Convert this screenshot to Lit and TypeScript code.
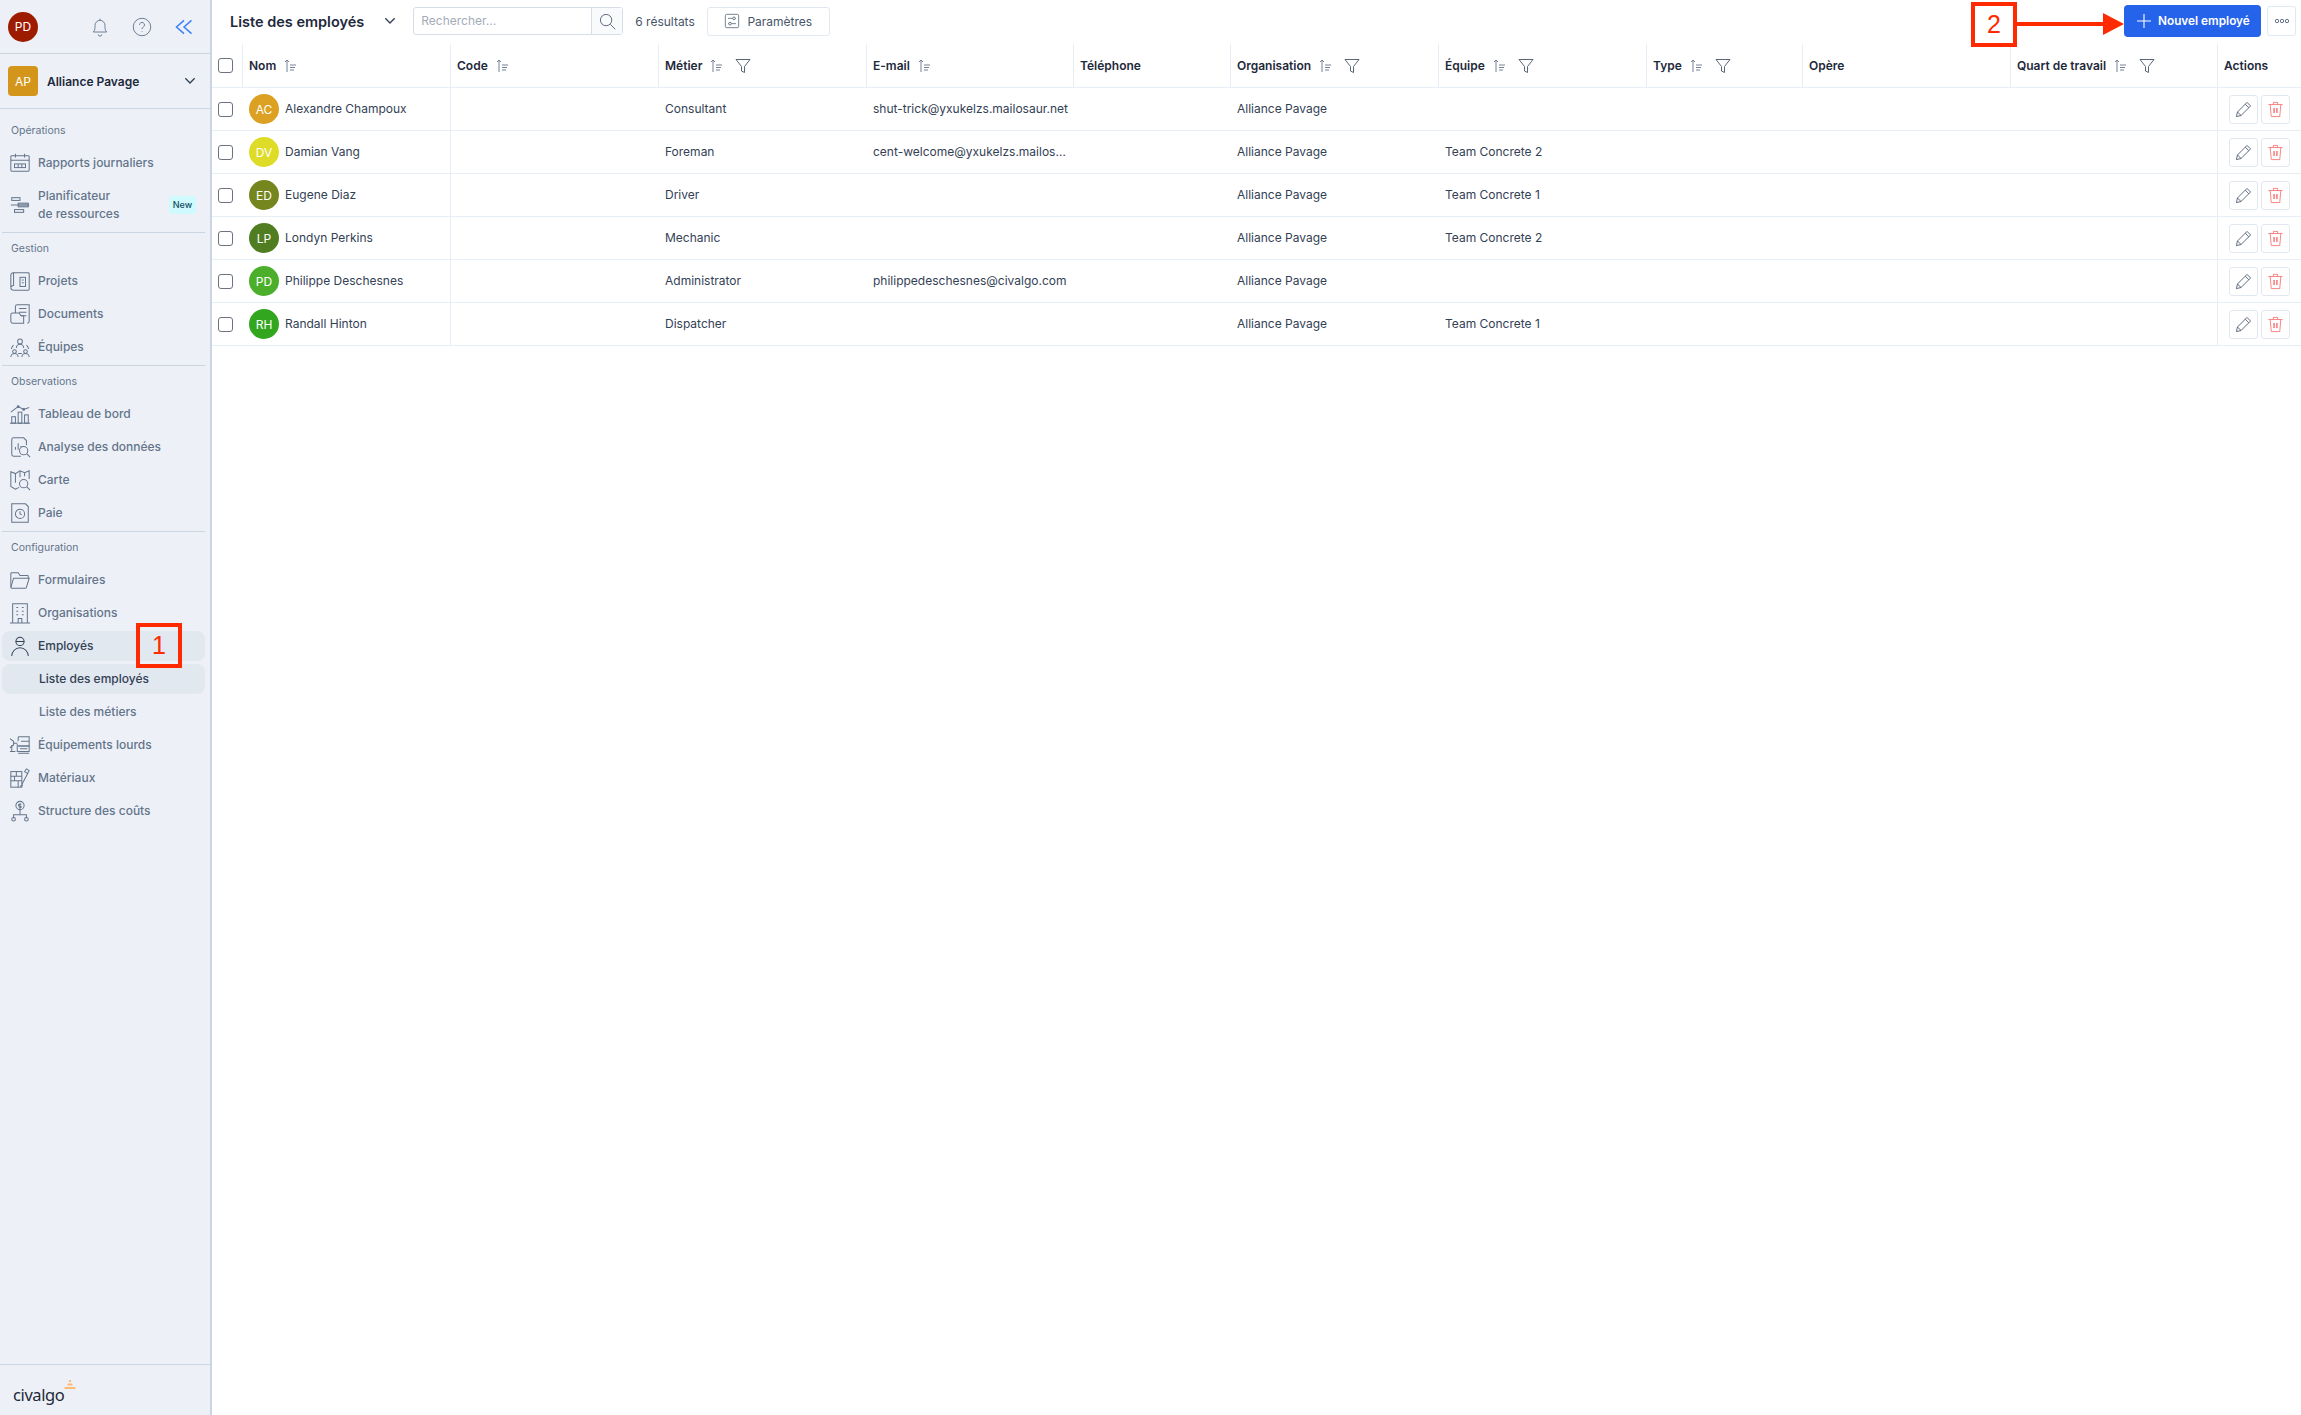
import { LitElement, html, css, svg } from "lit";
import { customElement } from "lit/decorators.js";

const icons: Record<string, unknown> = {
  rapports: svg`<rect x="2" y="4" width="20" height="17" rx="1"/><path d="M2 9h20M7 2v4M17 2v4"/><rect x="6" y="13" width="12" height="4"/><path d="M10 13v4M14 13v4"/>`,
  planif: svg`<path d="M2 12h20"/><rect x="3" y="4" width="9" height="3"/><rect x="10" y="10" width="11" height="4" fill="currentColor" fill-opacity=".4"/><rect x="6" y="17" width="10" height="3"/>`,
  projets: svg`<path d="M5 3h16a1 1 0 0 1 1 1v17a1 1 0 0 1-1 1H5"/><path d="M5 3a3 3 0 0 0-3 2v14a3 3 0 0 1 3-2z"/><path d="M2 19a3 3 0 0 0 3 3"/><rect x="12" y="8" width="6" height="10"/><path d="M14 11h2M14 14h2"/>`,
  documents: svg`<path d="M7 11V4a2 2 0 0 1 2-2h13v18a2 2 0 0 1-2 2"/><path d="M11 6h8M11 10h8M13 14h6"/><path d="M2 13a2 2 0 0 1 2-2h7l2 3h3v8H4a2 2 0 0 1-2-2z"/>`,
  equipes: svg`<circle cx="12" cy="6" r="2.600"/><path d="M8 13a4 4 0 0 1 8 0"/><circle cx="6" cy="17" r="2"/><path d="M2 23a4 4 0 0 1 8 0"/><circle cx="18" cy="17" r="2"/><path d="M14 23a4 4 0 0 1 8 0M5 10a9 9 0 0 0-2.500 4M19 10a9 9 0 0 1 2.500 4M10 19h4"/>`,
  tableau: svg`<path d="M1 22h22"/><rect x="3" y="15" width="4" height="7"/><rect x="10" y="10" width="4" height="12"/><rect x="17" y="13" width="4" height="9"/><path d="M2 10l8-6 6 3 6-2"/><circle cx="10" cy="4" r="1"/><circle cx="16" cy="7" r="1"/>`,
  analyse: svg`<path d="M13 22H5a2 2 0 0 1-2-2V4a2 2 0 0 1 2-2h11l3 3v5"/><path d="M7 15v-3M10 15V8M13 12v-1"/><circle cx="16" cy="16" r="4.500"/><path d="M19.500 19.500 23 23"/>`,
  carte: svg`<path d="M11 20l-4 2-5-3V3l5 2 5-3 5 2 5-2v9"/><path d="M7 5v10M12 2v7M17 4v4"/><circle cx="16" cy="16" r="4.500"/><path d="M19.500 19.500 23 23"/>`,
  paie: svg`<path d="M3 2h15l3 3v17H3z"/><circle cx="12" cy="13" r="5"/><path d="M12 10v3l2 1"/>`,
  formulaires: svg`<path d="M2 20V5a1 1 0 0 1 1-1h7l2 3h8a1 1 0 0 1 1 1v2"/><path d="M2 20l3-10h17l-3 10a1 1 0 0 1-1 1H3a1 1 0 0 1-1-1z"/>`,
  organisations: svg`<path d="M1 23h22M4 23V2h16v21"/><path d="M8 6h2M14 6h2M8 10h2M14 10h2M8 14h2M14 14h2"/><path d="M10 23v-5h4v5"/>`,
  employes: svg`<circle cx="12" cy="7" r="4.500"/><path d="M7.500 7h9M3 23a9 9 0 0 1 18 0"/>`,
  equipements: svg`<path d="M10 8V4a1 1 0 0 1 1-1h11v10H10"/><path d="M10 13h12v6H9v-8M13 8h9M12 16h8"/><path d="M1 5l4 3v4l-4 3M5 10h4M1 19h6M3 12v7"/><path d="M10 21h12"/>`,
  materiaux: svg`<rect x="2" y="5" width="12" height="17"/><path d="M2 10h12M2 15h12M8 5v5M6 10v5M10 15v7"/><path d="M14 19l7-13M19 2l3 2-2 3-3-2zM12 21l3-1"/>`,
  structure: svg`<circle cx="12" cy="6" r="4.500"/><path d="M12 3.500v5M13.500 4.700h-2.200a1 1 0 0 0 0 2h1.400a1 1 0 0 1 0 1.900h-2.200"/><path d="M12 11v5M5 20v-4h14v4"/><circle cx="5" cy="21" r="2"/><circle cx="19" cy="21" r="2"/>`,
};

const groups = [
  {
    label: "Opérations",
    first: true,
    items: [
      { icon: "rapports", text: "Rapports journaliers" },
      { icon: "planif", text: "Planificateur\nde ressources", badge: "New" },
    ],
  },
  {
    label: "Gestion",
    items: [
      { icon: "projets", text: "Projets" },
      { icon: "documents", text: "Documents" },
      { icon: "equipes", text: "Équipes" },
    ],
  },
  {
    label: "Observations",
    items: [
      { icon: "tableau", text: "Tableau de bord" },
      { icon: "analyse", text: "Analyse des données" },
      { icon: "carte", text: "Carte" },
      { icon: "paie", text: "Paie" },
    ],
  },
  {
    label: "Configuration",
    last: true,
    items: [
      { icon: "formulaires", text: "Formulaires" },
      { icon: "organisations", text: "Organisations" },
      { icon: "employes", text: "Employés", open: true },
      { text: "Liste des employés", sub: true, current: true },
      { text: "Liste des métiers", sub: true },
      { icon: "equipements", text: "Équipements lourds" },
      { icon: "materiaux", text: "Matériaux" },
      { icon: "structure", text: "Structure des coûts" },
    ],
  },
];

const columns = [
  { label: "Nom", sort: true },
  { label: "Code", sort: true },
  { label: "Métier", sort: true, filter: true },
  { label: "E-mail", sort: true },
  { label: "Téléphone" },
  { label: "Organisation", sort: true, filter: true },
  { label: "Équipe", sort: true, filter: true },
  { label: "Type", sort: true, filter: true },
  { label: "Opère" },
  { label: "Quart de travail", sort: true, filter: true },
];

const employees = [
  { initials: "AC", color: "#dca123", name: "Alexandre Champoux", job: "Consultant", email: "shut-trick@yxukelzs.mailosaur.net", team: "" },
  { initials: "DV", color: "#dedc27", name: "Damian Vang", job: "Foreman", email: "cent-welcome@yxukelzs.mailosaur.net", team: "Team Concrete 2" },
  { initials: "ED", color: "#76861f", name: "Eugene Diaz", job: "Driver", email: "", team: "Team Concrete 1" },
  { initials: "LP", color: "#4f7d20", name: "Londyn Perkins", job: "Mechanic", email: "", team: "Team Concrete 2" },
  { initials: "PD", color: "#4caf2c", name: "Philippe Deschesnes", job: "Administrator", email: "philippedeschesnes@civalgo.com", team: "" },
  { initials: "RH", color: "#33a620", name: "Randall Hinton", job: "Dispatcher", email: "", team: "Team Concrete 1" },
];

const chevron = html`<svg class="chev" viewBox="0 0 24 24"><path d="M5 8l7 7 7-7"/></svg>`;
const sortIcon = html`<svg class="sort" viewBox="0 0 12 14"><path d="M3 13V1M1 3l2-2 2 2M6 6h6M6 8.500h5M6 11h4"/></svg>`;
const filterIcon = html`<svg class="filter" viewBox="0 0 16 16"><path d="M1 1.500h14L9.500 8.500v6l-3-1.500V8.500z"/></svg>`;

@customElement("app-root")
export class AppRoot extends LitElement {
  static styles = css`
    :host {
      display: flex;
      height: 100vh;
      position: relative;
      overflow: hidden;
      font-family: Inter, "Liberation Sans", sans-serif;
      font-size: 12px;
      color: #334155;
      background: #fff;
    }
    svg {
      display: block;
      fill: none;
      stroke: currentColor;
    }

    .sidebar {
      box-sizing: border-box;
      width: 212px;
      flex: none;
      display: flex;
      flex-direction: column;
      background: #edf1f7;
      border-right: 2px solid #cbd5e1;
    }
    .top {
      height: 53px;
      flex: none;
      display: flex;
      align-items: center;
      padding-left: 8px;
      border-bottom: 1px solid #cbd5e1;
    }
    .avatar-me {
      width: 30px;
      height: 30px;
      border-radius: 50%;
      background: #9d1c00;
      color: #fff;
      font-size: 12px;
      display: flex;
      align-items: center;
      justify-content: center;
      margin-right: 52px;
    }
    .top svg {
      width: 20px;
      height: 20px;
      color: #64748b;
      stroke-width: 1.1;
      margin-right: 22px;
    }
    .top svg.collapse {
      color: #3b82f6;
      stroke-width: 1.8;
      margin-right: 0;
    }
    .org {
      height: 55px;
      flex: none;
      box-sizing: border-box;
      display: flex;
      align-items: center;
      padding: 0 12px 0 8px;
      border-bottom: 1px solid #cbd5e1;
      font-weight: 600;
      color: #1e293b;
    }
    .org-badge {
      width: 30px;
      height: 30px;
      border-radius: 4px;
      background: #d4961a;
      color: #fff;
      font-size: 12px;
      font-weight: 400;
      display: flex;
      align-items: center;
      justify-content: center;
      margin-right: 9px;
    }
    .org span {
      flex: 1;
    }
    .chev {
      width: 16px;
      height: 16px;
      stroke-width: 2;
      color: #334155;
    }

    .group {
      margin: 0 5px 0 2px;
      padding: 8px 0 3px;
      border-bottom: 1px solid #cbd5e1;
    }
    .group.first {
      padding-top: 14px;
    }
    .group.last {
      border-bottom: none;
    }
    .group-label {
      height: 16px;
      line-height: 16px;
      margin: 0 0 9px 9px;
      font-size: 10.5px;
      color: #64748b;
    }
    .items {
      display: flex;
      flex-direction: column;
      gap: 3px;
    }
    .item {
      min-height: 30px;
      box-sizing: border-box;
      display: flex;
      align-items: center;
      gap: 7px;
      padding: 0 9px 0 7px;
      border-radius: 8px;
      color: #64748b;
      font-weight: 500;
      line-height: 18px;
      white-space: pre-line;
    }
    .item svg {
      width: 22px;
      height: 22px;
      flex: none;
      stroke-width: 1.1;
    }
    .item.two-lines {
      min-height: 48px;
    }
    .item.sub {
      padding-left: 37px;
    }
    .item.open,
    .item.current {
      background: #e2e8f0;
      color: #334155;
    }
    .item .label {
      flex: 1;
    }
    .badge {
      height: 18px;
      width: 27px;
      border-radius: 3px;
      background: #cffafe;
      color: #164e63;
      font-size: 9px;
      line-height: 18px;
      text-align: center;
    }

    .footer {
      margin-top: auto;
      height: 51px;
      box-sizing: border-box;
      display: flex;
      align-items: flex-start;
      padding: 13px 0 0 13px;
      border-top: 1px solid #cbd5e1;
    }
    .logo {
      font-family: "Noto Sans", sans-serif;
      font-size: 16.5px;
      line-height: 34px;
      letter-spacing: -0.4px;
      color: #1f2937;
    }
    .cone {
      width: 12px;
      height: 10px;
      margin: 2px 0 0 0;
      stroke: none;
    }

    .main {
      flex: 1;
      min-width: 0;
    }
    .toolbar {
      height: 44px;
      box-sizing: border-box;
      display: flex;
      align-items: center;
      padding: 0 5px 2px 18px;
    }
    .title {
      font-size: 14.5px;
      font-weight: 600;
      color: #1e293b;
      margin-right: 18px;
    }
    .toolbar > .chev {
      margin-right: 15px;
    }
    .search {
      width: 210px;
      height: 28px;
      box-sizing: border-box;
      display: flex;
      border: 1px solid #d6dde6;
      border-radius: 3px;
      margin-right: 12px;
    }
    .search-text {
      flex: 1;
      padding-left: 7px;
      line-height: 25px;
      color: #a3acb9;
    }
    .search-btn {
      width: 30px;
      background: #f8fafc;
      border-left: 1px solid #d6dde6;
      display: flex;
      align-items: center;
      justify-content: center;
      color: #475569;
    }
    .search-btn svg {
      width: 17px;
      height: 17px;
      stroke-width: 1.2;
    }
    .count {
      margin-right: 12px;
      color: #475569;
    }
    .params {
      width: 123px;
      height: 29px;
      box-sizing: border-box;
      display: flex;
      align-items: center;
      justify-content: center;
      gap: 7px;
      border: 1px solid #e2e8f0;
      border-radius: 3px;
      color: #475569;
    }
    .params svg {
      width: 16px;
      height: 16px;
      stroke-width: 1.1;
    }
    .new {
      margin-left: auto;
      width: 137px;
      height: 32px;
      box-sizing: border-box;
      display: flex;
      align-items: center;
      gap: 6px;
      padding-left: 12px;
      border-radius: 4px;
      background: #2563eb;
      color: #fff;
      font-size: 11.8px;
      font-weight: 600;
    }
    .new svg {
      width: 16px;
      height: 16px;
      stroke-width: 1.1;
    }
    .more {
      width: 29px;
      height: 30px;
      box-sizing: border-box;
      margin-left: 6px;
      display: flex;
      align-items: center;
      justify-content: center;
      border: 1px solid #e2e8f0;
      border-radius: 3px;
      color: #64748b;
    }
    .more svg {
      width: 16px;
      height: 8px;
      stroke-width: 1;
    }

    .row {
      display: grid;
      grid-template-columns: 31px 208px 208px 208px 207px 157px 208px 208px 156px 208px 207px 83px;
      height: 42px;
      border-bottom: 1px solid #e8eef5;
    }
    .row.head {
      height: 43px;
    }
    .cell {
      display: flex;
      align-items: center;
      min-width: 0;
      padding-left: 6px;
    }
    .head .cell {
      font-weight: 600;
      color: #1e293b;
      border-right: 1px solid #e8eef5;
    }
    .head .cell:last-child {
      border-right: none;
    }
    .head .label {
      margin-right: 8px;
    }
    .cell.name {
      border-right: 1px solid #e8eef5;
    }
    .text {
      margin-bottom: 2px;
      min-width: 0;
    }
    .sort {
      width: 12px;
      height: 14px;
      stroke-width: 0.9;
      color: #64748b;
      margin-right: 13px;
    }
    .filter {
      width: 16px;
      height: 16px;
      stroke-width: 0.9;
      color: #475569;
    }
    .check {
      width: 15px;
      height: 15px;
      box-sizing: border-box;
      border: 1px solid #6b7280;
      border-radius: 3px;
    }
    .avatar {
      width: 30px;
      height: 30px;
      flex: none;
      border-radius: 50%;
      color: #fff;
      font-size: 12px;
      display: flex;
      align-items: center;
      justify-content: center;
      margin-right: 6px;
    }
    .ellipsis {
      overflow: hidden;
      text-overflow: ellipsis;
      white-space: nowrap;
      padding-right: 5px;
    }
    .actions {
      gap: 3px;
      padding-left: 11px;
      border-left: 1px solid #e8eef5;
      margin-left: -1px;
    }
    .action {
      width: 29px;
      height: 29px;
      box-sizing: border-box;
      display: flex;
      align-items: center;
      justify-content: center;
      border: 1px solid #e2e8f0;
      border-radius: 3px;
      color: #475569;
    }
    .action.danger {
      color: #f87171;
    }
    .action svg {
      width: 17px;
      height: 17px;
      stroke-width: 1.2;
    }

    .note {
      position: absolute;
      box-sizing: border-box;
      width: 46px;
      height: 45px;
      border: 4px solid #ff2a00;
      color: #ff2a00;
      font-family: "Liberation Sans", sans-serif;
      font-size: 25px;
      line-height: 37px;
      text-align: center;
    }
    .note.one {
      left: 136px;
      top: 623px;
    }
    .note.two {
      left: 1971px;
      top: 2px;
    }
    .arrow {
      position: absolute;
      left: 2016px;
      top: 12px;
      width: 109px;
      height: 24px;
      stroke: none;
    }
  `;

  renderItem(item: any) {
    const cls = [
      "item",
      item.sub ? "sub" : "",
      item.open ? "open" : "",
      item.current ? "current" : "",
      item.badge ? "two-lines" : "",
    ].join(" ");
    return html`<div class=${cls}>
      ${item.icon ? html`<svg viewBox="0 0 24 24">${icons[item.icon]}</svg>` : ""}
      <span class="label">${item.text}</span>
      ${item.badge ? html`<span class="badge">${item.badge}</span>` : ""}
    </div>`;
  }

  renderSidebar() {
    return html`<aside class="sidebar">
      <div class="top">
        <div class="avatar-me">PD</div>
        <svg viewBox="0 0 24 24"><path d="M4 18c2-2 2-4 2-8a6 6 0 0 1 12 0c0 4 0 6 2 8zM12 4V2M10 21a2 2 0 0 0 4 0"/></svg>
        <svg viewBox="0 0 24 24"><circle cx="12" cy="12" r="10.500"/><path d="M9 9.500a3 3 0 1 1 4.500 2.600c-1 .6-1.500 1.200-1.500 2.400M12 17v.8"/></svg>
        <svg class="collapse" viewBox="0 0 24 24"><path d="M12 4l-9 8 9 8M21 4l-9 8 9 8"/></svg>
      </div>
      <div class="org">
        <div class="org-badge">AP</div>
        <span>Alliance Pavage</span>
        ${chevron}
      </div>
      ${groups.map(
        (g) => html`<section class="group ${g.first ? "first" : ""} ${g.last ? "last" : ""}">
          <div class="group-label">${g.label}</div>
          <div class="items">${g.items.map((i) => this.renderItem(i))}</div>
        </section>`
      )}
      <div class="footer">
        <span class="logo">civalgo</span>
        <svg class="cone" viewBox="0 0 12 10">
          <rect x="5" y="0" width="2" height="2" fill="#fdba74" />
          <rect x="3.500" y="3.500" width="5" height="2" fill="#fdba74" />
          <rect x="0.500" y="7" width="11" height="2" fill="#fdba74" />
        </svg>
      </div>
    </aside>`;
  }

  renderToolbar() {
    return html`<div class="toolbar">
      <span class="title">Liste des employés</span>
      ${chevron}
      <div class="search">
        <span class="search-text">Rechercher...</span>
        <span class="search-btn"><svg viewBox="0 0 24 24"><circle cx="10" cy="10" r="8"/><path d="M16 16l7 7"/></svg></span>
      </div>
      <span class="count">6 résultats</span>
      <div class="params">
        <svg viewBox="0 0 24 24"><rect x="2" y="2" width="20" height="20" rx="2"/><path d="M6 8h7M17 8h1M6 16h1M11 16h7"/><circle cx="15" cy="8" r="2"/><circle cx="9" cy="16" r="2"/></svg>
        Paramètres
      </div>
      <div class="new">
        <svg viewBox="0 0 16 16"><path d="M8 1v14M1 8h14"/></svg>
        Nouvel employé
      </div>
      <div class="more">
        <svg viewBox="0 0 16 8"><circle cx="3" cy="4" r="1.700"/><circle cx="8" cy="4" r="1.700"/><circle cx="13" cy="4" r="1.700"/></svg>
      </div>
    </div>`;
  }

  renderRow(e: (typeof employees)[number]) {
    return html`<div class="row">
      <div class="cell"><div class="check"></div></div>
      <div class="cell name">
        <div class="avatar" style="background:${e.color}">${e.initials}</div>
        <span class="text">${e.name}</span>
      </div>
      <div class="cell"></div>
      <div class="cell"><span class="text">${e.job}</span></div>
      <div class="cell"><span class="text ellipsis">${e.email}</span></div>
      <div class="cell"></div>
      <div class="cell"><span class="text">Alliance Pavage</span></div>
      <div class="cell"><span class="text">${e.team}</span></div>
      <div class="cell"></div>
      <div class="cell"></div>
      <div class="cell"></div>
      <div class="cell actions">
        <div class="action">
          <svg viewBox="0 0 24 24"><path d="M2 22l1.500-6.500L17 2l5 5L8.500 20.500zM3.500 15.500l5 5M14.500 4.500l5 5"/></svg>
        </div>
        <div class="action danger">
          <svg viewBox="0 0 24 24"><path d="M2 5h20M9 5V2h6v3M4.500 5l1.500 17h12l1.500-17"/><path d="M10 10v7M14 10v7" stroke-width="2"/></svg>
        </div>
      </div>
    </div>`;
  }

  render() {
    return html`
      ${this.renderSidebar()}
      <main class="main">
        ${this.renderToolbar()}
        <div class="row head">
          <div class="cell"><div class="check"></div></div>
          ${columns.map(
            (c) => html`<div class="cell">
              <span class="label">${c.label}</span>
              ${c.sort ? sortIcon : ""} ${c.filter ? filterIcon : ""}
            </div>`
          )}
          <div class="cell">Actions</div>
        </div>
        ${employees.map((e) => this.renderRow(e))}
      </main>
      <div class="note one">1</div>
      <div class="note two">2</div>
      <svg class="arrow" viewBox="0 0 109 24">
        <rect x="0" y="10" width="90" height="4" fill="#ff2a00" />
        <path d="M87 1l21 11-21 11z" fill="#ff2a00" />
      </svg>
    `;
  }
}
